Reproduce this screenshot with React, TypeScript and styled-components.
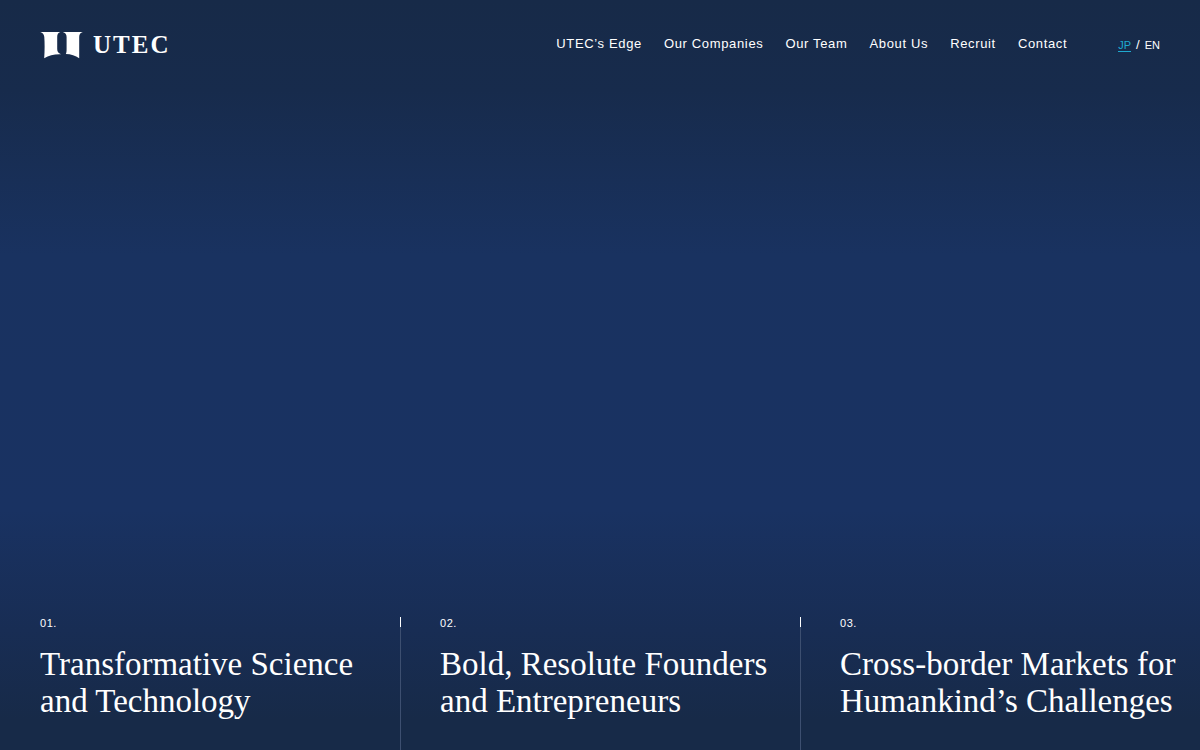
import React from "react";
import styled, { createGlobalStyle } from "styled-components";

const GlobalStyle = createGlobalStyle`
  *, *::before { box-sizing: border-box; }
  body {
    margin: 0;
    background: #172a48;
    color: #fff;
    font-family: "Liberation Sans", Arial, sans-serif;
  }
`;

const Page = styled.div`
  min-height: 100vh;
  display: flex;
  flex-direction: column;
  justify-content: space-between;
  background: linear-gradient(
    180deg,
    #172a48 0%,
    #172b4c 12%,
    #193260 34%,
    #193262 68%,
    #182d54 84%,
    #172a48 96%
  );
`;

const Header = styled.header`
  display: flex;
  align-items: flex-start;
  justify-content: space-between;
  padding: 30px 40px 0;
`;

const LogoLink = styled.a`
  display: flex;
  align-items: center;
  gap: 10px;
  height: 30px;
  color: inherit;
  text-decoration: none;
`;

const LogoMark = styled.svg`
  display: block;
  flex: none;
`;

const LogoName = styled.span`
  font-family: "Liberation Serif", "Times New Roman", serif;
  font-size: 25px;
  font-weight: 700;
  line-height: 30px;
  letter-spacing: 2px;
`;

const HeaderRight = styled.div`
  display: flex;
  align-items: flex-start;
  gap: 51px;
  padding-top: 6px;
`;

const NavList = styled.ul`
  display: flex;
  flex-wrap: wrap;
  gap: 22px;
  margin: 0;
  padding: 0;
  list-style: none;
`;

const NavLink = styled.a`
  display: block;
  color: inherit;
  font-size: 13px;
  line-height: 16px;
  letter-spacing: 0.05em;
  white-space: nowrap;
  text-decoration: none;
`;

const Languages = styled.div`
  display: flex;
  gap: 5px;
  padding-top: 3px;
  font-size: 11px;
  line-height: 12px;
  white-space: nowrap;
`;

const LanguageLink = styled.a<{ $current?: boolean }>`
  color: ${(p) => (p.$current ? "#1fa9d0" : "inherit")};
  border-bottom: 1px solid ${(p) => (p.$current ? "#1fa9d0" : "transparent")};
  text-decoration: none;
`;

const Slash = styled.span`
  font-size: 13px;
`;

const Pillars = styled.main`
  display: grid;
  grid-template-columns: repeat(3, minmax(0, 1fr));
`;

const Pillar = styled.section<{ $divided: boolean }>`
  position: relative;
  padding: 0 0 30px 39px;
  border-left: 1px solid ${(p) => (p.$divided ? "#3d4f70" : "transparent")};

  &::before {
    content: "";
    display: ${(p) => (p.$divided ? "block" : "none")};
    position: absolute;
    top: 0;
    left: -1px;
    width: 1px;
    height: 10px;
    background: #fff;
  }
`;

const PillarNumber = styled.p`
  margin: 0 0 17px;
  font-size: 11px;
  line-height: 12px;
  letter-spacing: 0.05em;
`;

const PillarTitle = styled.h2`
  margin: 0;
  font-family: "Liberation Serif", "Times New Roman", serif;
  font-size: 33px;
  font-weight: 400;
  line-height: 37px;
`;

const navItems = [
  "UTEC’s Edge",
  "Our Companies",
  "Our Team",
  "About Us",
  "Recruit",
  "Contact",
];

const pillars = [
  { number: "01.", lines: ["Transformative Science", "and Technology"] },
  { number: "02.", lines: ["Bold, Resolute Founders", "and Entrepreneurs"] },
  { number: "03.", lines: ["Cross-border Markets for", "Humankind’s Challenges"] },
];

export default function App() {
  return (
    <>
      <GlobalStyle />
      <Page>
        <Header>
          <LogoLink href="#top">
            <LogoMark width="43" height="30" viewBox="0 0 43 30" fill="#fff" aria-hidden="true">
              <path d="M0.3 2H20.3C18 2.800 17.200 4.500 17.200 7V19C17.200 21.600 18.300 23.200 21 24.200C14 24 9 25.300 4.200 28.200C4.800 20 4.700 13 4.300 7C4 4.300 2.700 2.700 0.300 2Z" />
              <path d="M22.800 2H42.800C40.300 2.700 39.200 4.300 39.200 7V28.200C35.500 25.600 31 24.200 25.800 24C26.400 23 26.600 21.500 26.600 19V7C26.600 4.500 25.300 2.800 22.800 2Z" />
            </LogoMark>
            <LogoName>UTEC</LogoName>
          </LogoLink>
          <HeaderRight>
            <nav aria-label="Main">
              <NavList>
                {navItems.map((item) => (
                  <li key={item}>
                    <NavLink href="#">{item}</NavLink>
                  </li>
                ))}
              </NavList>
            </nav>
            <Languages>
              <LanguageLink href="#jp" $current>
                JP
              </LanguageLink>
              <Slash>/</Slash>
              <LanguageLink href="#en">EN</LanguageLink>
            </Languages>
          </HeaderRight>
        </Header>
        <Pillars>
          {pillars.map(({ number, lines }, index) => (
            <Pillar key={number} $divided={index > 0}>
              <PillarNumber>{number}</PillarNumber>
              <PillarTitle>
                {lines[0]}
                <br />
                {lines[1]}
              </PillarTitle>
            </Pillar>
          ))}
        </Pillars>
      </Page>
    </>
  );
}
